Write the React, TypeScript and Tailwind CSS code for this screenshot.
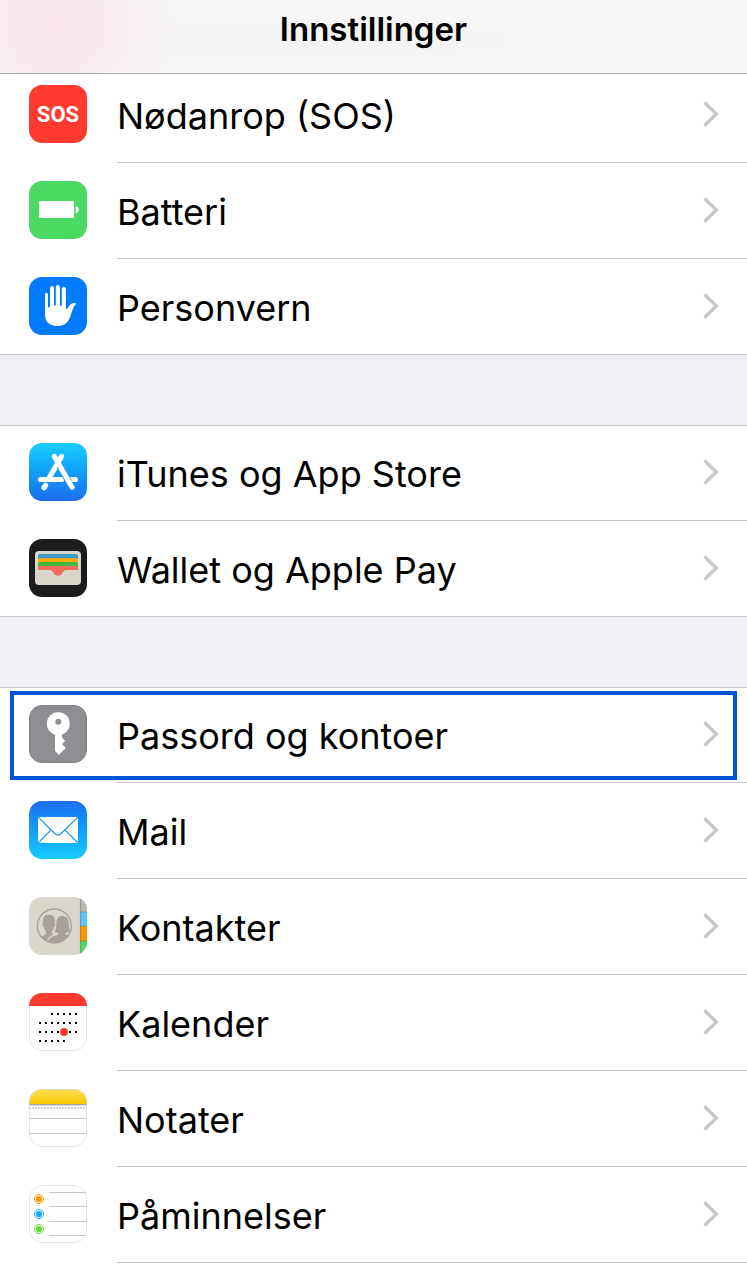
import React from "react";

type Item = {
  label: string;
  icon: React.ReactNode;
  active?: boolean;
};

// Rounded square that every settings icon sits in
function IconTile({
  className = "",
  children,
}: {
  className?: string;
  children: React.ReactNode;
}) {
  return (
    <span
      aria-hidden="true"
      className={`mt-[18px] block size-[58px] shrink-0 overflow-hidden rounded-[13px] ${className}`}>
      {children}
    </span>
  );
}

function SosIcon() {
  return (
    <IconTile className="bg-[#ff3b30]">
      <span className="flex size-full items-center justify-center font-['Roboto',sans-serif] text-[22px] font-bold text-white">
        SOS
      </span>
    </IconTile>
  );
}

function BatteryIcon() {
  return (
    <IconTile className="bg-[#4cd964]">
      <svg viewBox="0 0 58 58" fill="#fff">
        <rect x="10" y="20" width="35" height="17" rx="1" />
        <path d="M46.7 25c4.2 1 4.2 6.200 0 7.200z" />
      </svg>
    </IconTile>
  );
}

function HandIcon() {
  return (
    <IconTile className="bg-[#007aff]">
      <svg viewBox="0 0 58 58" fill="#fff">
        <path d="M16 17.200a1.500 1.500 0 0 1 3 0V29.500a1 1 0 0 0 2 0V11a2 2 0 0 1 4 0v16.800a.9.900 0 0 0 1.800 0V10a2.050 2.050 0 0 1 4.100 0v17.800a.9.900 0 0 0 1.900 0V12a2.050 2.050 0 0 1 4.100 0v20.500c1.200-.2 2-1.500 3-3.200 1.700-2.500 4.300-3.700 6.600-3.100.900.300.700 1-.1 1.500-2.200 1.800-3.200 6-4.600 10.300-2.300 7.200-5.800 11-13 11-8.500 0-12.800-3.800-12.800-12z" />
      </svg>
    </IconTile>
  );
}

function AppStoreIcon() {
  return (
    <IconTile className="bg-linear-to-b from-[#1bcdfd] to-[#1d6cf2]">
      <svg viewBox="0 0 58 58" fill="none" strokeWidth="5.200" strokeLinecap="round">
        <path stroke="#fff" d="M11.600 36.500H32.500M40 36.500h6.400M16.600 42.300l-1.600 2.400M32.500 13.500L19.500 36" />
        <path stroke="#1d9ff8" strokeWidth="6.800" strokeLinecap="butt" d="M30.500 22.500L40 39" />
        <path stroke="#fff" d="M25.300 13.500L43.100 44.300" />
      </svg>
    </IconTile>
  );
}

function WalletIcon() {
  return (
    <IconTile className="bg-[#1c1c1c]">
      <svg viewBox="0 0 58 58">
        <rect x="6" y="12" width="46" height="34" rx="4" fill="#d9d6cc" />
        <path fill="#3f99cd" d="M9 20v-3q0-2 2-2h36q2 0 2 2v3z" />
        <path fill="#ffad00" d="M9 24v-2.700q0-2 2-2h36q2 0 2 2V24z" />
        <path fill="#43b93c" d="M9 28v-3q0-2 2-2h36q2 0 2 2v3z" />
        <path fill="#f36d5f" d="M9 31v-2q0-2 2-2h36q2 0 2 2v2H37c-3 0-3.500 5.700-8 5.700S24 31 21 31z" />
        <path stroke="#b9b6ad" strokeWidth=".6" d="M6 30.600h3M49 30.600h3" />
      </svg>
    </IconTile>
  );
}

function KeyIcon() {
  return (
    <IconTile className="border border-[#7f7f84] bg-[#8e8e93]">
      <svg viewBox="1 1 56 56">
        <circle cx="29.300" cy="18.700" r="11.500" fill="#fff" />
        <path
          fill="#fff"
          d="M26 28h7v4.500l3.200 3.300-2.700 2.700v1.200l2.700 2.500v1.500l-2.500 2.300L30 50l-4-4z"
        />
        <circle cx="29.300" cy="16.700" r="3" fill="#8e8e93" />
      </svg>
    </IconTile>
  );
}

function MailIcon() {
  return (
    <IconTile className="bg-linear-to-b from-[#1e6ef2] to-[#1acbfd]">
      <svg viewBox="0 0 58 58" fill="none">
        <rect x="9" y="16" width="40" height="26" fill="#fff" />
        <path
          stroke="#1e9cf8"
          strokeWidth="1.200"
          d="M9 16l16.800 16.500q3.200 3 6.400 0L49 16M9 42l13-13M49 42L36 29"
        />
      </svg>
    </IconTile>
  );
}

function ContactsIcon() {
  return (
    <IconTile className="bg-[#d9d6cc]">
      <svg viewBox="0 0 58 58">
        <defs>
          <clipPath id="contacts-circle">
            <circle cx="25.300" cy="29" r="17.200" />
          </clipPath>
        </defs>
        <path fill="#bcb8af" d="M51 0h7v15h-7z" />
        <path fill="#5ac8fa" d="M51 15h7v14h-7z" />
        <path fill="#ff9500" d="M51 29h7v15h-7z" />
        <path fill="#4cd964" d="M51 44h7v14h-7z" />
        <path stroke="#6d6a62" strokeOpacity=".55" strokeWidth=".9" d="M51.400 0v58M51 15h7M51 29h7M51 44h7" />
        <g clipPath="url(#contacts-circle)" fill="#a8a199">
          <path d="M18 50v-5.500c1.500-4 5-5 9.500-6.300 1.800-.5 2.300-1.400 1.800-2.400-1.700 0-3-.3-3.600-.9 1.700-3 1.200-6 1.600-9.600.5-4.400 2.800-6.300 6-6.300 4.400 0 6.200 2.800 6.500 7 .3 3.400 0 5.800 1.400 8-.7 1.300-2.500 1.600-4.600 1.700-.4 1.300.3 2 1.600 2.400l6.800 2V50z" />
          <path
            stroke="#d9d6cc"
            strokeWidth="1.200"
            d="M3 52V41.500c4-1.500 9.500-2.200 12.200-3.900 1.100-.8 1.200-2.100.9-3.200-1.200-1-1.700-2.400-1.900-4-1.300-.6-1.700-3.500-.8-4.200-.7-5.800 1.400-9.200 6.500-9.200 5.200 0 7.100 3.500 6.400 9.200.9.800.4 3.600-.8 4.200-.2 1.600-.7 3-1.800 4-.3 1.700.1 2.900 1.600 3.600-4 1.300-7.100 3.500-7.300 8V52z"
          />
        </g>
        <circle cx="25.300" cy="29" r="17" fill="none" stroke="#a8a199" strokeWidth="1.300" />
      </svg>
    </IconTile>
  );
}

function CalendarIcon() {
  const columns = [11, 17, 23, 29, 35, 41, 47];
  const rows = [
    { y: 21, days: columns.slice(2) },
    { y: 30, days: columns },
    { y: 39, days: columns },
    { y: 48, days: columns.slice(0, 5) },
  ];

  return (
    <IconTile className="bg-white">
      <svg viewBox="0 0 58 58">
        <rect x=".5" y=".5" width="57" height="57" rx="12.500" fill="none" stroke="#e3e3e5" />
        <path fill="#ff3b30" d="M0 0h58v13H0z" />
        {rows.map(({ y, days }) =>
          days.map((x) => (
            <rect key={`${x}-${y}`} x={x - 1} y={y - 1} width="2" height="2" fill="#000" />
          ))
        )}
        <circle cx="35" cy="39" r="4" fill="#ff3b30" />
      </svg>
    </IconTile>
  );
}

function NotesIcon() {
  return (
    <IconTile className="bg-white">
      <svg viewBox="0 0 58 58" fill="none">
        <defs>
          <linearGradient id="notes-top" x1="0" y1="0" x2="0" y2="1">
            <stop offset="0" stopColor="#ffdf56" />
            <stop offset="1" stopColor="#fdc800" />
          </linearGradient>
        </defs>
        <path fill="url(#notes-top)" d="M0 0h58v15H0z" />
        <path stroke="#a9a69a" d="M0 15.500h58" />
        <path stroke="#dcdcde" d="M0 16.500h58" />
        <path stroke="#d0d0d3" strokeWidth="2" strokeDasharray="2 1" d="M0 19h58" />
        <path stroke="#c7c7cc" d="M0 29.500h58M0 44.500h58" />
        <rect x=".5" y=".5" width="57" height="57" rx="12.500" stroke="#d5d5d8" strokeOpacity=".7" />
      </svg>
    </IconTile>
  );
}

function RemindersIcon() {
  const bullets = [
    { y: 14, color: "#ff9500" },
    { y: 29, color: "#1badf8" },
    { y: 44, color: "#63da38" },
  ];

  return (
    <IconTile className="bg-white">
      <svg viewBox="0 0 58 58" fill="none">
        <rect x=".5" y=".5" width="57" height="57" rx="12.500" stroke="#e3e3e5" />
        <path stroke="#c7c7cc" d="M20 7.500h37M20 21.500h38M20 36.500h38M20 50.500h37" />
        {bullets.map(({ y, color }) => (
          <g key={y}>
            <circle cx="10" cy={y} r="4.500" stroke={color} />
            <circle cx="10" cy={y} r="3.100" fill={color} />
          </g>
        ))}
      </svg>
    </IconTile>
  );
}

const groups: Item[][] = [
  [
    { label: "Nødanrop (SOS)", icon: <SosIcon /> },
    { label: "Batteri", icon: <BatteryIcon /> },
    { label: "Personvern", icon: <HandIcon /> },
  ],
  [
    { label: "iTunes og App Store", icon: <AppStoreIcon /> },
    { label: "Wallet og Apple Pay", icon: <WalletIcon /> },
  ],
  [
    { label: "Passord og kontoer", icon: <KeyIcon />, active: true },
    { label: "Mail", icon: <MailIcon /> },
    { label: "Kontakter", icon: <ContactsIcon /> },
    { label: "Kalender", icon: <CalendarIcon /> },
    { label: "Notater", icon: <NotesIcon /> },
    { label: "Påminnelser", icon: <RemindersIcon /> },
  ],
];

function Chevron() {
  return (
    <svg
      aria-hidden="true"
      viewBox="0 0 16 28"
      className="h-7 w-4 shrink-0"
      fill="none"
      stroke="#c7c7cc"
      strokeWidth="3.400">
      <path d="M1.500 2.500L13.300 14 1.500 25.500" />
    </svg>
  );
}

function SettingsRow({ item, fullLine }: { item: Item; fullLine: boolean }) {
  return (
    <li className="relative">
      <a
        href="#"
        className={`flex gap-[30px] pl-[29px] ${
          fullLine ? "border-b border-[#c8c7cc]" : ""
        }`}>
        {item.icon}
        <span
          className={`flex flex-1 items-center justify-between pr-7 pb-px ${
            fullLine ? "h-[95px]" : "h-24 border-b border-[#c8c7cc]"
          }`}>
          <span className="pt-[3px] text-[36px] leading-none">{item.label}</span>
          <Chevron />
        </span>
      </a>
      {item.active && (
        <span className="pointer-events-none absolute inset-x-2.5 top-1 bottom-[3px] border-4 border-[#0056d6]" />
      )}
    </li>
  );
}

export default function App() {
  return (
    <div className="min-h-screen bg-white font-['Inter',sans-serif] text-black">
      <header className="sticky top-0 z-10 flex h-[74px] justify-center border-b border-[#b2b2b2] bg-[#f7f7f7] bg-[radial-gradient(circle_at_55px_25px,#f9e7eb_0,#f8ebee_50px,#f7f7f700_130px),radial-gradient(ellipse_at_300px_40px,#f3f3f3_0,#f4f4f4_120px,#f7f7f700_260px)]">
        <h1 className="pt-[11px] text-[33px] leading-9 font-semibold">Innstillinger</h1>
      </header>

      {/* The first group is scrolled slightly under the header */}
      <main className="-mt-[7px]">
        {groups.map((items, groupIndex) => (
          <React.Fragment key={groupIndex}>
            {groupIndex > 0 && <div className="h-[70px] bg-[#efeff4]" />}
            <ul className={groupIndex > 0 ? "shadow-[inset_0_1px_0_#c8c7cc]" : ""}>
              {items.map((item, index) => (
                <SettingsRow
                  key={item.label}
                  item={item}
                  fullLine={
                    index === items.length - 1 && groupIndex < groups.length - 1
                  }
                />
              ))}
            </ul>
          </React.Fragment>
        ))}
      </main>
    </div>
  );
}
